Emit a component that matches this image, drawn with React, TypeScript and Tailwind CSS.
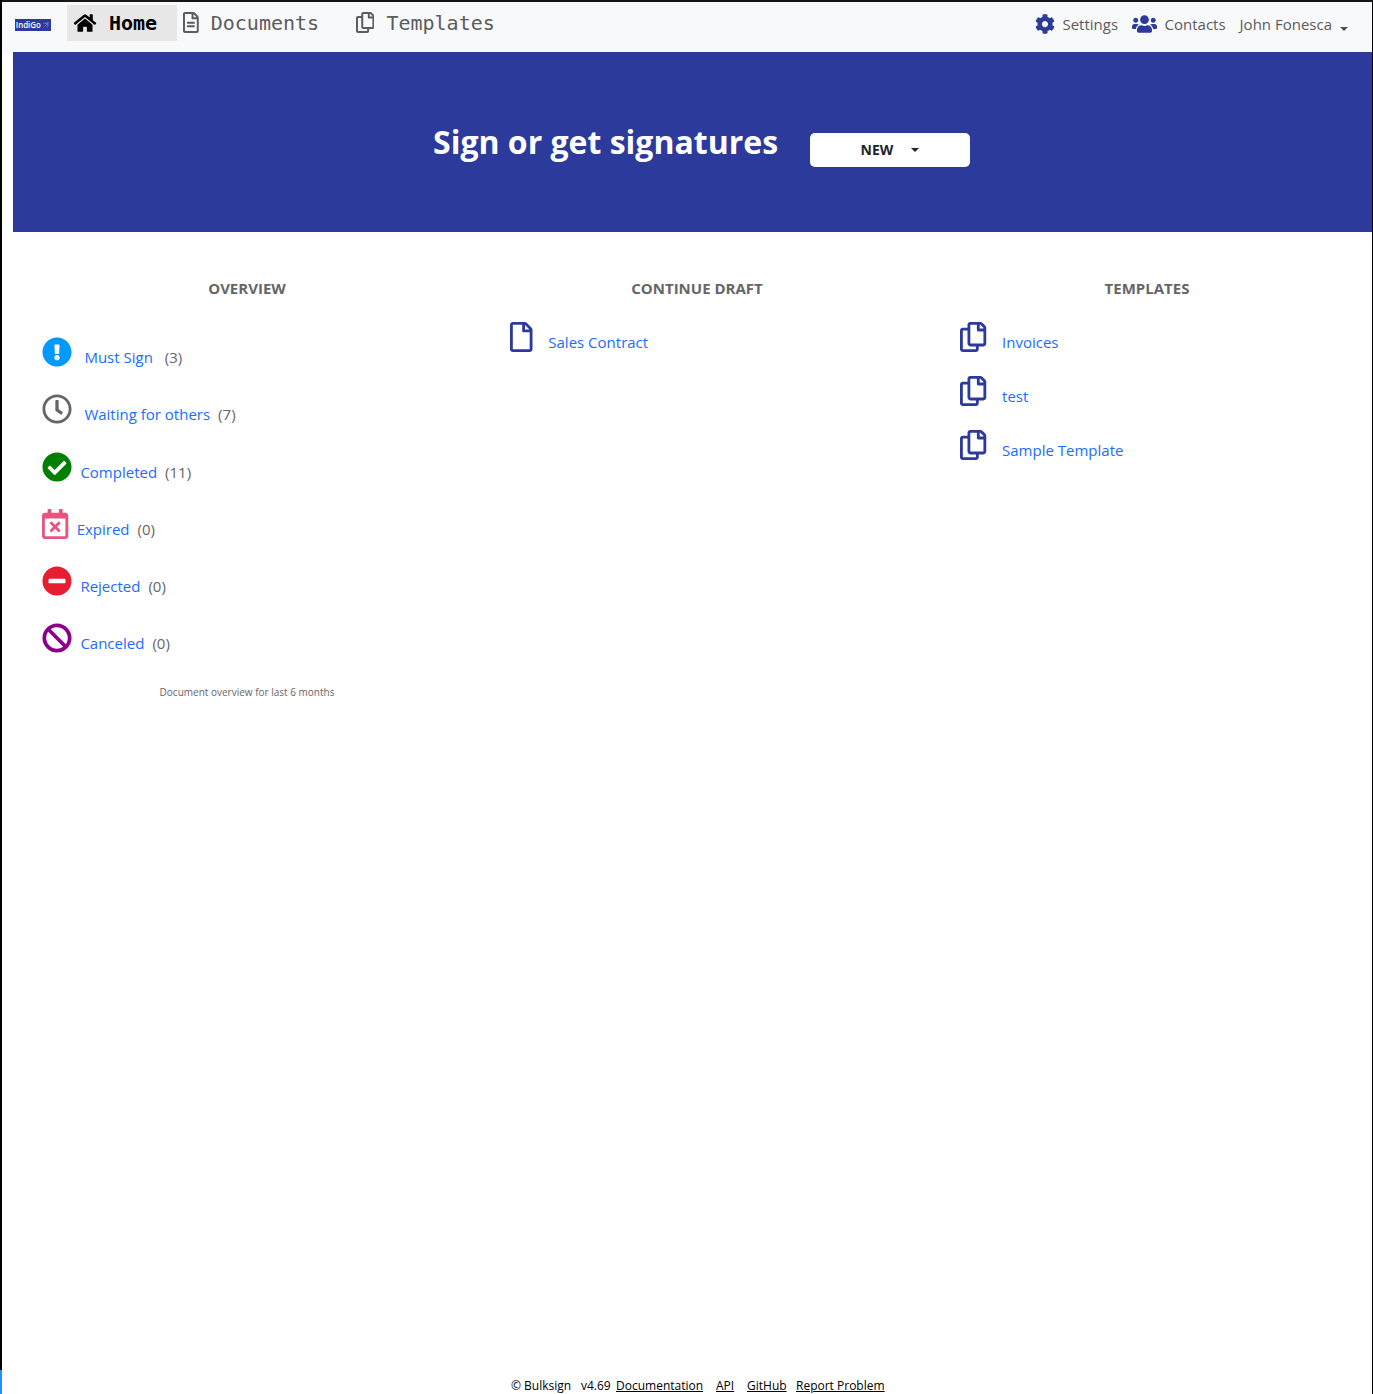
import React from "react";
import {
  FaBan,
  FaCheckCircle,
  FaCog,
  FaExclamationCircle,
  FaHome,
  FaMinusCircle,
  FaRegCalendarTimes,
  FaRegClock,
  FaRegCopy,
  FaRegFile,
  FaRegFileAlt,
  FaUsers,
} from "react-icons/fa";

const overview = [
  { label: "Must Sign", count: 3, icon: <FaExclamationCircle className="h-[30px] w-[30px] text-[#0099ff]" />, gap: "ml-3", countGap: "ml-3" },
  { label: "Waiting for others", count: 7, icon: <FaRegClock className="h-[30px] w-[30px] text-[#666666]" />, gap: "ml-3", countGap: "ml-2" },
  { label: "Completed", count: 11, icon: <FaCheckCircle className="h-[30px] w-[30px] text-[#008000]" />, gap: "ml-2", countGap: "ml-2" },
  { label: "Expired", count: 0, icon: <FaRegCalendarTimes className="h-[30px] w-[26.25px] text-[#e75480]" />, gap: "ml-2", countGap: "ml-2" },
  { label: "Rejected", count: 0, icon: <FaMinusCircle className="h-[30px] w-[30px] text-[#e61e2f]" />, gap: "ml-2", countGap: "ml-2" },
  { label: "Canceled", count: 0, icon: <FaBan className="h-[30px] w-[30px] text-[#8b008b]" />, gap: "ml-2", countGap: "ml-2" },
];

const templates = ["Invoices", "test", "Sample Template"];

function Caret({ className }: { className: string }) {
  return <span className={`h-0 w-0 border-x-4 border-t-4 border-x-transparent ${className}`} />;
}

function Logo() {
  return (
    <svg className="mt-[17px] ml-[13px] h-3 w-9 shrink-0" viewBox="0 0 36 12">
      <rect width="36" height="12" fill="#2b3a9b" />
      <text
        x="0.8"
        y="9.4"
        fontFamily="Open Sans, sans-serif"
        fontSize="9.5"
        fontWeight="600"
        fill="#fff"
        textLength="25"
        lengthAdjust="spacingAndGlyphs"
      >
        IndiGo
      </text>
      <path d="M28.5 4.5l5-1-1 5M33 4l-4.5 4.500M31 4v1.500M33 6h-1.500" fill="none" stroke="#8f9ad8" strokeWidth="0.8" strokeDasharray="1 .6" />
    </svg>
  );
}

function Header() {
  return (
    <header className="flex h-[50px] shrink-0 items-start bg-[#f8f9fa] text-[#5c5c5c]">
      <Logo />
      <nav className="mt-[3px] ml-4 flex h-9 font-['DejaVu_Sans_Mono',monospace] text-[20px] leading-9">
        <a className="flex w-[110px] bg-[#e7e7e7] font-bold text-black">
          <FaHome className="mt-2 ml-[6px] h-5 w-6" />
          <span className="ml-3">Home</span>
        </a>
        <a className="flex w-[173px]">
          <FaRegFileAlt className="mt-[7px] ml-[6px] h-[21px] w-[15.75px]" />
          <span className="ml-3">Documents</span>
        </a>
        <a className="flex">
          <FaRegCopy className="mt-[7px] ml-[6px] h-[21px] w-[18.4px]" />
          <span className="ml-3">Templates</span>
        </a>
      </nav>
      <div className="mt-[10px] mr-6 ml-auto flex h-6 text-[15px] leading-6">
        <FaCog className="mt-[2px] h-5 w-5 text-[#2b3a9b]" />
        <span className="ml-[7px]">Settings</span>
        <FaUsers className="mt-[2px] ml-[13.5px] h-5 w-[25px] text-[#2b3a9b]" />
        <span className="ml-2">Contacts</span>
        <span className="ml-[14px]">John Fonesca</span>
        <Caret className="mt-[15px] ml-2 border-t-[#4c4c4c]" />
      </div>
    </header>
  );
}

function Heading({ children }: { children: React.ReactNode }) {
  return <h2 className="text-center text-[15px] leading-6 font-bold">{children}</h2>;
}

export default function App() {
  return (
    <div className="flex h-[1394px] w-[1373px] overflow-hidden bg-white font-['Open_Sans',sans-serif] text-[#666666]">
      <div className="flex w-[2px] shrink-0 flex-col">
        <div className="h-[1370px] bg-black" />
        <div className="grow bg-[#1e90ff]" />
      </div>
      <div className="flex min-w-0 grow flex-col border-t-2 border-r border-t-[#151519] border-r-black">
        <Header />
        <section className="ml-[11px] flex h-[180px] shrink-0 items-start bg-[#2b3a9b]">
          <h1 className="mt-[66px] ml-[420px] w-[377px] text-[32px] leading-[48px] font-bold whitespace-nowrap text-white">
            Sign or get signatures
          </h1>
          <button className="mt-[81px] flex h-[34px] w-40 items-center rounded-[5px] bg-white text-[14px] font-bold text-[#212529]">
            <span className="mb-[2px] ml-[50.5px] w-[50.5px] text-left">NEW</span>
            <Caret className="border-t-[#212529]" />
          </button>
        </section>

        <main className="grid grow grid-cols-[450px_450px_450px] pt-11 pl-5 text-[15px] leading-6">
          <section>
            <Heading>OVERVIEW</Heading>
            <ul className="mt-[37px] ml-[20.4px]">
              {overview.map((item) => (
                <li key={item.label} className="flex h-[57.25px] items-start">
                  {item.icon}
                  <a className={`mt-2 text-[#1a6dfd] ${item.gap}`}>{item.label}</a>
                  <span className={`mt-2 ${item.countGap}`}>({item.count})</span>
                </li>
              ))}
            </ul>
            <p className="-mt-px text-center text-[10px] leading-6">Document overview for last 6 months</p>
          </section>
          <section>
            <Heading>CONTINUE DRAFT</Heading>
            <div className="mt-[22px] ml-[38.3px] flex items-start">
              <FaRegFile className="h-[30px] w-[22.5px] text-[#2b3a9b]" />
              <a className="mt-2 ml-[15.5px] text-[#1a6dfd]">Sales Contract</a>
            </div>
          </section>
          <section>
            <Heading>TEMPLATES</Heading>
            <ul className="mt-[22px] ml-[38.3px]">
              {templates.map((name) => (
                <li key={name} className="flex h-[54px] items-start">
                  <FaRegCopy className="h-[30px] w-[26.25px] text-[#2b3a9b]" />
                  <a className="mt-2 ml-[15.5px] text-[#1a6dfd]">{name}</a>
                </li>
              ))}
            </ul>
          </section>
        </main>

        <footer className="ml-[509px] flex h-[17px] shrink-0 text-[12px] leading-[18px] whitespace-nowrap text-black">
          <span className="w-[70px]">© Bulksign</span>
          <span className="w-[35px]">v4.69</span>
          <a className="w-[100px] underline">Documentation</a>
          <a className="w-[31px] underline">API</a>
          <a className="w-[49px] underline">GitHub</a>
          <a className="underline">Report Problem</a>
        </footer>
      </div>
    </div>
  );
}
